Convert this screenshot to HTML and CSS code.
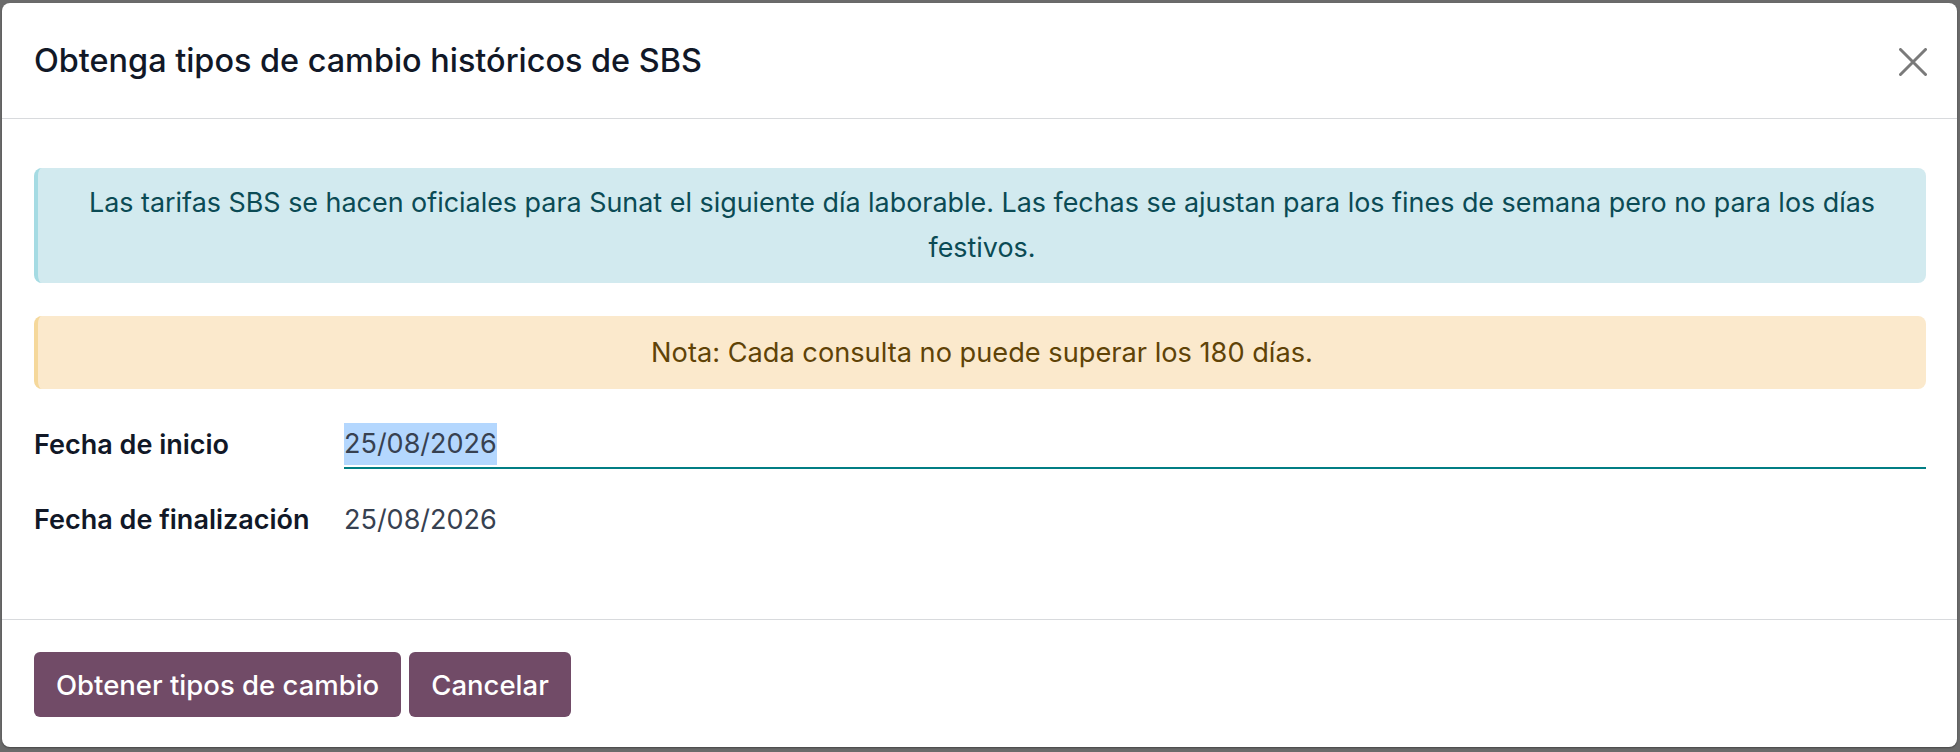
FILE: index.html
```html
<!DOCTYPE html>
<html lang="es">
<head>
    <meta charset="UTF-8">
    <title>Tipos de cambio SBS</title>
    <link rel="stylesheet" href="styles.css">
</head>
<body>
<div class="modal">
    <header class="modal-header">
        <h4 class="modal-title">Obtenga tipos de cambio históricos de SBS</h4>
        <button class="btn-close" aria-label="Cerrar">
            <svg width="28" height="28" viewBox="0 0 28 28">
                <path d="M1.5 1.5 L26.5 26.5 M26.5 1.5 L1.5 26.5" stroke="#7a7a7a" stroke-width="3" stroke-linecap="round"/>
            </svg>
        </button>
    </header>

    <main class="modal-body">
        <div class="alert alert-info">
            Las tarifas SBS se hacen oficiales para Sunat el siguiente día laborable. Las fechas se ajustan para los fines de semana pero no para los días festivos.
        </div>
        <div class="alert alert-warning">
            Nota: Cada consulta no puede superar los 180 días.
        </div>

        <div class="fields">
            <div class="field-row">
                <label class="field-label" for="date_from">Fecha de inicio</label>
                <div class="field-input is-focused" id="date_from">
                    <span class="selected">25/08/2026</span>
                </div>
            </div>
            <div class="field-row">
                <label class="field-label">Fecha de finalización</label>
                <div class="field-input">25/08/2026</div>
            </div>
        </div>
    </main>

    <footer class="modal-footer">
        <button class="btn btn-primary">Obtener tipos de cambio</button>
        <button class="btn btn-primary">Cancelar</button>
    </footer>
</div>
</body>
</html>
```

FILE: styles.css
```css
html, body {
    height: 100%;
}

body {
    margin: 0;
    background: #6b6b6b;
    font-family: Inter, Roboto, "Liberation Sans", sans-serif;
    color: #111827;
    box-sizing: border-box;
    padding: 3px 3px 5px 2px;
}

.modal {
    height: 100%;
    display: flex;
    flex-direction: column;
    background: #fff;
    border-radius: 8px;
    box-shadow: 0 1px 2px rgba(0, 0, 0, 0.35);
}

/* header */
.modal-header {
    height: 115px;
    display: flex;
    align-items: center;
    justify-content: space-between;
    padding: 0 30px 0 32px;
    border-bottom: 1px solid #d8dadd;
}
.modal-title {
    margin: 0;
    font-size: 32.4px;
    font-weight: 500;
    color: #111827;
}
.btn-close {
    border: 0;
    background: none;
    padding: 0;
    width: 28px;
    height: 28px;
    margin-top: 3px;
}
.btn-close svg {
    display: block;
}

/* body */
.modal-body {
    flex: 1;
    padding: 49px 31px 0 32px;
}

.alert {
    font-size: 26.9px;
    line-height: 45px;
    text-align: center;
    border-radius: 8px;
    border-left: 4px solid;
    padding: 12px 24px 13px;
}
.alert-info {
    background: #d2eaef;
    color: #0b4b55;
    border-left-color: #a5dbe3;
}
.alert-warning {
    margin-top: 33px;
    padding: 14px 24px;
    font-size: 27.2px;
    background: #fbe9cc;
    color: #5f4307;
    border-left-color: #f5d89b;
}

.fields {
    margin-top: 34px;
}
.field-row {
    display: flex;
    align-items: flex-start;
    font-size: 27px;
}
.field-row + .field-row {
    margin-top: 29px;
}
.field-label {
    width: 310px;
    flex-shrink: 0;
    line-height: 44px;
    font-weight: 600;
    color: #111827;
}
.field-input {
    flex: 1;
    line-height: 44px;
    color: #374151;
}
.field-input.is-focused {
    line-height: 42px;
    padding-bottom: 2px;
    border-bottom: 2px solid #017e84;
}
.selected {
    display: inline-block;
    background: #b4d7fe;
}

/* footer */
.modal-footer {
    display: flex;
    gap: 8px;
    padding: 32px 32px 30px;
    border-top: 1px solid #d8dadd;
}
.btn {
    height: 65px;
    padding: 0 22px;
    border: 0;
    border-radius: 6px;
    font-family: inherit;
    font-size: 27.5px;
    font-weight: 500;
}
.btn-primary {
    background: #714b67;
    color: #fff;
}
```
